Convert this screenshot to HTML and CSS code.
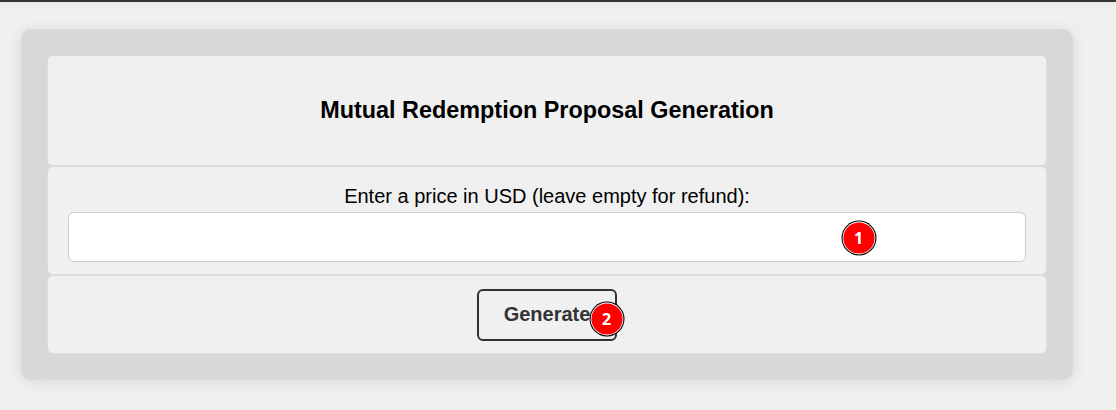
FILE: index.html
```html
<!DOCTYPE html>
<html lang="en">
<head>
<meta charset="utf-8">
<title>Mutual Redemption Proposal Generation</title>
<link rel="stylesheet" href="styles.css">
</head>
<body>
<header class="topbar"></header>
<main class="panel">
  <section class="card card-title"><h3>Mutual Redemption Proposal Generation</h3></section>
  <section class="card card-field">
    <label class="label" for="price">Enter a price in USD (leave empty for refund):</label>
    <div class="field">
      <input class="input" id="price" type="text">
      <svg class="badge badge-input" viewBox="0 0 36 36">
        <circle class="badge-edge" cx="18" cy="18" r="17.5"/>
        <circle class="badge-ring" cx="18" cy="18" r="16.4"/>
        <circle class="badge-fill" cx="18" cy="18" r="15.6"/>
        <text class="badge-text" x="17.7" y="24">1</text>
      </svg>
    </div>
  </section>
  <section class="card card-action">
    <div class="action">
      <button class="button" type="button">Generate</button>
      <svg class="badge badge-button" viewBox="0 0 36 36">
        <circle class="badge-edge" cx="18" cy="18" r="17.5"/>
        <circle class="badge-ring" cx="18" cy="18" r="16.4"/>
        <circle class="badge-fill" cx="18" cy="18" r="15.6"/>
        <text class="badge-text" x="17.7" y="24">2</text>
      </svg>
    </div>
  </section>
</main>
</body>
</html>
```

FILE: styles.css
```css
* { box-sizing: border-box; }
body {
  margin: 0;
  height: 410px;
  overflow: hidden;
  background: #f0f0f0;
  color: #000;
  font: 20px/24px "Liberation Sans", Arial, sans-serif;
}
.topbar {
  height: 2px;
  background: #333;
  box-shadow: 0 2px 5px rgba(0, 0, 0, 0.1);
}
.panel {
  width: 1052px;
  height: 351px;
  margin: 27px 0 0 21px;
  padding: 25px;
  border: 1px solid #dadada;
  border-radius: 10px;
  background: #d8d8d8;
  box-shadow: 0 2px 15px rgba(0, 0, 0, 0.1);
}
.card {
  display: flex;
  flex-direction: column;
  align-items: center;
  border: 1px solid #ddd;
  border-radius: 6px;
  background: #f0f0f0;
}
.card-title { height: 111px; justify-content: center; padding-bottom: 2px; }
.card-title h3 { margin: 0; font-size: 23.4px; line-height: 28px; }
.card-field { height: 109px; padding: 17px 20px 0; }
.label { height: 28px; }
.field { position: relative; width: 100%; height: 50px; }
.input {
  display: block;
  width: 100%;
  height: 50px;
  border: 1px solid #ccc;
  border-radius: 6px;
  background: #fff;
}
.card-action { height: 79px; padding-top: 13px; }
.action { position: relative; }
.button {
  display: block;
  width: 140px;
  height: 52px;
  padding: 0 0 2px;
  border: 2px solid #333;
  border-radius: 6px;
  background: transparent;
  color: #333;
  font: bold 20px/24px "Liberation Sans", Arial, sans-serif;
}
.badge {
  position: absolute;
  width: 36px;
  height: 36px;
}
.badge-edge { fill: #000; }
.badge-ring { fill: #fff; }
.badge-fill { fill: #f00; }
.badge-text {
  fill: #fff;
  font: bold 16px "Open Sans", sans-serif;
  text-anchor: middle;
}
.badge-input { top: 8px; right: 149px; }
.badge-button { top: 12px; left: 112px; }
```
